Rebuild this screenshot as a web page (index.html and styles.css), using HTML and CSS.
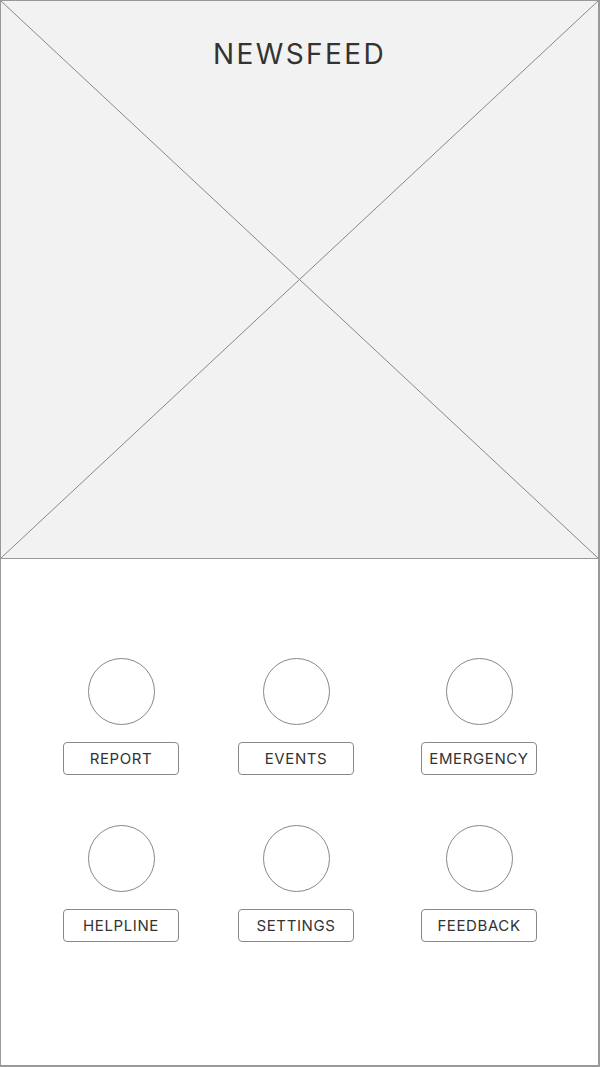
FILE: index.html
```html
<!DOCTYPE html>
<html lang="en">
<head>
  <meta charset="UTF-8">
  <meta name="viewport" content="width=device-width, initial-scale=1.0">
  <title>Newsfeed</title>
  <link rel="stylesheet" href="styles.css">
</head>
<body>
  <div class="frame">
    <div class="hero">
      <svg class="hero-cross" viewBox="0 0 100 100" preserveAspectRatio="none">
        <line x1="0" y1="0" x2="100" y2="100" />
        <line x1="100" y1="0" x2="0" y2="100" />
      </svg>
      <h1 class="hero-title">NEWSFEED</h1>
    </div>

    <div class="menu">
      <div class="menu-item">
        <div class="menu-icon"></div>
        <button class="menu-btn">REPORT</button>
      </div>
      <div class="menu-item">
        <div class="menu-icon"></div>
        <button class="menu-btn">EVENTS</button>
      </div>
      <div class="menu-item">
        <div class="menu-icon"></div>
        <button class="menu-btn">EMERGENCY</button>
      </div>
      <div class="menu-item">
        <div class="menu-icon"></div>
        <button class="menu-btn">HELPLINE</button>
      </div>
      <div class="menu-item">
        <div class="menu-icon"></div>
        <button class="menu-btn">SETTINGS</button>
      </div>
      <div class="menu-item">
        <div class="menu-icon"></div>
        <button class="menu-btn">FEEDBACK</button>
      </div>
    </div>
  </div>
</body>
</html>
```

FILE: styles.css
```css
body {
  margin: 0;
  font-family: Inter, "Noto Sans", sans-serif;
  color: #333;
  background-color: #fff;
}

.frame {
  width: 600px;
  height: 1067px;
  box-sizing: border-box;
  border: 1px solid #999;
  border-bottom-width: 2px;
  border-right-width: 2px;
}

.hero {
  position: relative;
  height: 557px;
  background-color: #f2f2f2;
  border-bottom: 1px solid #999;
}

.hero-cross {
  position: absolute;
  top: 0;
  left: 0;
  width: 100%;
  height: 100%;
}

.hero-cross line {
  stroke: #888;
  stroke-width: 1;
  vector-effect: non-scaling-stroke;
}

.hero-title {
  position: relative;
  margin: 0;
  padding-top: 39px;
  text-align: center;
  font-size: 28px;
  font-weight: 400;
  line-height: 28px;
  letter-spacing: 2.4px;
  color: #333;
}

.menu {
  display: grid;
  grid-template-columns: 175px 183px 116px;
  row-gap: 50px;
  padding: 99px 0 0 62px;
}

.menu-item {
  display: flex;
  flex-direction: column;
  align-items: center;
  width: 116px;
  gap: 17px;
}

.menu-icon {
  width: 65px;
  height: 65px;
  border: 1px solid #888;
  border-radius: 50%;
}

.menu-btn {
  width: 116px;
  height: 33px;
  padding: 0;
  background-color: #fff;
  border: 1px solid #888;
  border-radius: 4px;
  font-family: inherit;
  font-size: 15px;
  letter-spacing: 0.6px;
  color: #333;
  cursor: pointer;
}
```
